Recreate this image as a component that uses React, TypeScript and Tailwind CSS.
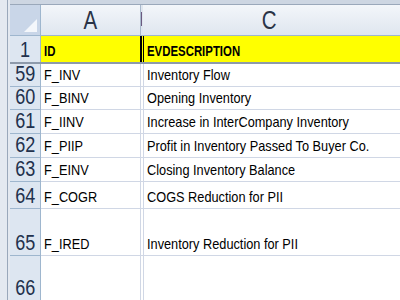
import React from 'react';

const rows = [
  { n: '59', id: 'F_INV', d: 'Inventory Flow', h: 'h-[23px]' },
  { n: '60', id: 'F_BINV', d: 'Opening Inventory', h: 'h-[23px]' },
  { n: '61', id: 'F_IINV', d: 'Increase in InterCompany Inventory', h: 'h-[24px]' },
  { n: '62', id: 'F_PIIP', d: 'Profit in Inventory Passed To Buyer Co.', h: 'h-[24px]' },
  { n: '63', id: 'F_EINV', d: 'Closing Inventory Balance', h: 'h-[24px]' },
  { n: '64', id: 'F_COGR', d: 'COGS Reduction for PII', h: 'h-[27px]' },
  { n: '65', id: 'F_IRED', d: 'Inventory Reduction for PII', h: 'h-[47px]' },
  { n: '66', id: '', d: '', h: 'h-[45px]' },
];

const font = "font-['Liberation_Sans',Arial,sans-serif]";

// Excel text in the shot is squeezed horizontally
function Cell({ children, bold }: { children: React.ReactNode; bold?: boolean }) {
  return (
    <span
      className={`inline-block origin-left whitespace-nowrap text-[15px] leading-none text-black ${
        bold ? 'scale-x-[0.76] font-bold' : 'scale-x-[0.85]'
      }`}
    >
      {children}
    </span>
  );
}

function Num({ children, big }: { children: React.ReactNode; big?: boolean }) {
  return (
    <span
      className={`inline-block scale-x-[0.82] leading-none ${
        big ? 'text-[25px] text-[#2a3346]' : 'text-[22px] text-[#22314d]'
      }`}
    >
      {children}
    </span>
  );
}

export default function App() {
  return (
    <div className={`flex h-[300px] w-[400px] overflow-hidden bg-white ${font}`}>
      {/* window frame */}
      <div className="flex w-[10px] shrink-0 bg-[#e4e9f0]">
        <div className="ml-[7px] w-px bg-[#9aa8ba]" />
      </div>

      <div className="flex min-w-0 flex-1 flex-col">
        <div className="h-[5px] shrink-0 border-b border-[#9aa8ba] bg-[#cdd6e2]" />

        {/* column headers */}
        <div className="flex h-[31px] shrink-0 border-b border-[#9eb6ce]">
          <div className="relative w-[31px] shrink-0 border-r border-[#9eb6ce] bg-[#c9d6e8]">
            <svg className="absolute right-[3px] bottom-[3px]" width="13" height="13" viewBox="0 0 13 13">
              <polygon points="13,0 13,13 0,13" fill="#f4f7fb" />
            </svg>
          </div>
          <div className="flex w-[99px] shrink-0 items-center justify-center bg-gradient-to-b from-[#f3f6fa] to-[#dfe6ef]">
            <Num big>A</Num>
          </div>
          <div className="relative w-[3px] shrink-0 bg-[#dfe6ef]">
            <div className="absolute left-0 top-0 h-full w-px bg-[#a8b8cc]" />
            <div className="absolute left-[1px] top-[7px] h-[14px] w-px bg-[#6b5a80]" />
          </div>
          <div className="flex flex-1 items-center justify-center bg-gradient-to-b from-[#f3f6fa] to-[#dfe6ef] pr-[4px]">
            <Num big>C</Num>
          </div>
        </div>

        {/* row 1 */}
        <div className="flex h-[26px] shrink-0">
          <div className="flex w-[31px] shrink-0 items-end justify-center border-r border-[#9eb6ce] bg-[#dde6f1] pb-[1px]">
            <Num>1</Num>
          </div>
          <div className="flex w-[99px] shrink-0 items-end bg-[#ffff00] pb-[4px] pl-[3px]">
            <Cell bold>ID</Cell>
          </div>
          <div className="flex w-[4px] shrink-0 justify-between bg-[#ffff00]">
            <div className="w-[2px] bg-black" />
            <div className="w-[1px] bg-black" />
          </div>
          <div className="flex flex-1 items-end bg-[#ffff00] pb-[4px] pl-[3px]">
            <Cell bold>EVDESCRIPTION</Cell>
          </div>
        </div>
        <div className="h-[2px] shrink-0 bg-[#8d9aab]" />

        {rows.map((r) => (
          <div key={r.n} className={`flex shrink-0 border-b border-[#d0d7e5] ${r.h}`}>
            <div className="-mb-px flex w-[31px] shrink-0 items-end justify-center border-r border-b border-[#9eb6ce] bg-[#dde6f1] pb-[1px]">
              <Num>{r.n}</Num>
            </div>
            <div className="flex w-[99px] shrink-0 items-end pb-[4px] pl-[3px]">
              <Cell>{r.id}</Cell>
            </div>
            <div className="flex w-[4px] shrink-0 justify-between">
              <div className="w-px bg-[#d0d7e5]" />
              <div className="w-px bg-[#d0d7e5]" />
            </div>
            <div className="flex flex-1 items-end pb-[4px] pl-[3px]">
              <Cell>{r.d}</Cell>
            </div>
          </div>
        ))}
      </div>
    </div>
  );
}
